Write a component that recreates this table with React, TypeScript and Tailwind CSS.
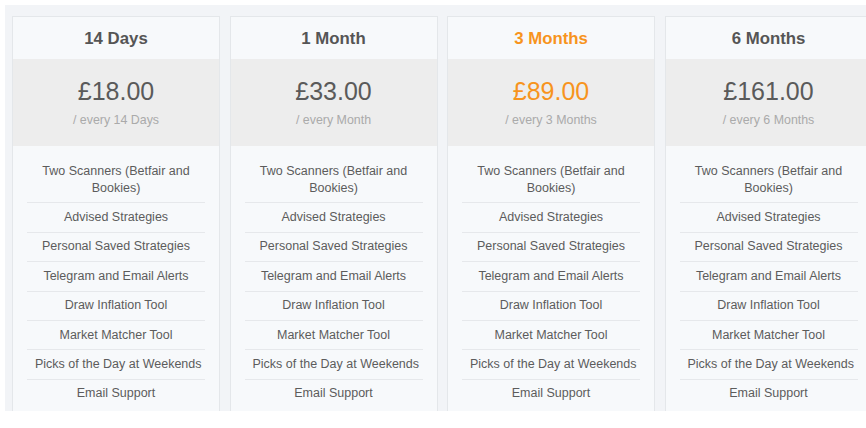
import React from 'react';

const plans = [
  { name: '14 Days', price: '£18.00', period: '/ every 14 Days', featured: false },
  { name: '1 Month', price: '£33.00', period: '/ every Month', featured: false },
  { name: '3 Months', price: '£89.00', period: '/ every 3 Months', featured: true },
  { name: '6 Months', price: '£161.00', period: '/ every 6 Months', featured: false },
];

const features = [
  'Two Scanners (Betfair and Bookies)',
  'Advised Strategies',
  'Personal Saved Strategies',
  'Telegram and Email Alerts',
  'Draw Inflation Tool',
  'Market Matcher Tool',
  'Picks of the Day at Weekends',
  'Email Support',
];

function PlanCard({ plan }: { plan: (typeof plans)[number] }) {
  const accent = plan.featured ? 'text-[#f7941d]' : 'text-[#555]';
  return (
    <div className="w-[208px] shrink-0 border border-[#e4e7ea] border-b-0 bg-[#f7f9fb]">
      <div className="h-[42.5px] flex items-center justify-center pt-[1px]">
        <h3 className={`text-[16.8px] font-bold ${accent}`}>{plan.name}</h3>
      </div>
      <div className="h-[87px] bg-[#ededed] flex flex-col items-center pt-[16.5px]">
        <div className={`text-[25px] leading-[30px] ${plan.featured ? 'text-[#f7941d]' : 'text-[#5a5a5a]'}`}>{plan.price}</div>
        <div className="mt-[7.5px] text-[12.4px] leading-[15px] text-[#aaa]">{plan.period}</div>
      </div>
      <ul className="px-[14px] pt-[11px]">
        {features.map((f, i) => (
          <li
            key={f}
            className={`px-[8px] py-[5.7px] text-center text-[12.5px] leading-[17px] text-[#5c5c5c] ${
              i < features.length - 1 ? 'border-b border-[#e6e8eb]' : ''
            } ${i === 0 ? '' : 'whitespace-nowrap'}`}
          >
            {f}
          </li>
        ))}
      </ul>
    </div>
  );
}

export default function App() {
  return (
    <div className="w-[866px] h-[428px] bg-white overflow-hidden pt-[4.5px] pl-[4.5px]" style={{ fontFamily: '"Liberation Sans", Arial, sans-serif' }}>
      <div className="w-[861.5px] h-[406px] bg-[#f2f4f7] overflow-hidden flex gap-[9.5px] pl-[7.5px] pt-[11px]">
        {plans.map((p) => (
          <PlanCard key={p.name} plan={p} />
        ))}
      </div>
    </div>
  );
}
